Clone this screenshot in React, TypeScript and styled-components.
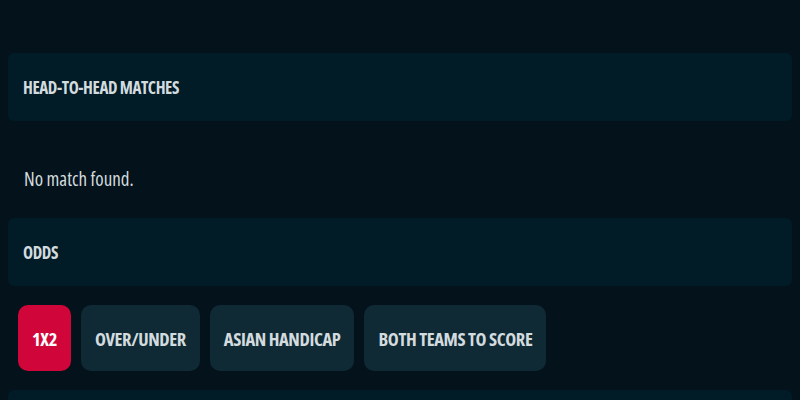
import styled, { createGlobalStyle } from 'styled-components';

const GlobalStyle = createGlobalStyle`
  body {
    margin: 0;
    background-color: #03121b;
    color: #d3dbdf;
    font-family: 'Open Sans', 'Roboto', sans-serif;
    font-stretch: 75%;
  }
`;

const tabs = ['1X2', 'Over/Under', 'Asian Handicap', 'Both Teams to Score'];

function App() {
  const active = 0;

  return (
    <StyledPage>
      <GlobalStyle />
      <StyledSectionHeader>
        <StyledTitle>Head-to-Head Matches</StyledTitle>
      </StyledSectionHeader>
      <StyledEmpty>No match found.</StyledEmpty>
      <StyledSectionHeader>
        <StyledTitle>Odds</StyledTitle>
      </StyledSectionHeader>
      <StyledTabList>
        {tabs.map((tab, i) => (
          <StyledTab key={tab} $active={i === active}>
            {tab}
          </StyledTab>
        ))}
      </StyledTabList>
      <StyledOddsTable />
    </StyledPage>
  );
}

const StyledPage = styled.div`
  padding: 53px 8px 0;
  height: 400px;
  box-sizing: border-box;
  overflow: hidden;
`;

const StyledSectionHeader = styled.div`
  display: flex;
  align-items: center;
  height: 68px;
  padding: 0 15px;
  background-color: #011c27;
  border-radius: 6px;
`;

const StyledTitle = styled.h2`
  margin: 0;
  font-size: 17px;
  font-weight: 700;
  letter-spacing: -0.4px;
  text-transform: uppercase;
`;

const StyledEmpty = styled.p`
  margin: 0;
  padding: 46px 16px 27px;
  font-size: 19px;
  line-height: 24px;
  font-weight: 400;
`;

const StyledTabList = styled.div`
  display: flex;
  gap: 0 10px;
  padding: 19px 10px;
`;

const StyledTab = styled.button<{ $active: boolean }>`
  height: 66px;
  padding: 0 14px;
  border: none;
  border-radius: 10px;
  background-color: ${({ $active }) => ($active ? '#d0063b' : '#0f2a35')};
  color: ${({ $active }) => ($active ? '#ffffff' : '#d3dbdf')};
  font-family: inherit;
  font-stretch: 75%;
  font-size: 18.5px;
  font-weight: 700;
  letter-spacing: -0.4px;
  text-transform: uppercase;
  cursor: pointer;
`;

const StyledOddsTable = styled.div`
  height: 80px;
  background-color: #011c27;
  border-radius: 6px;
`;

export default App;
